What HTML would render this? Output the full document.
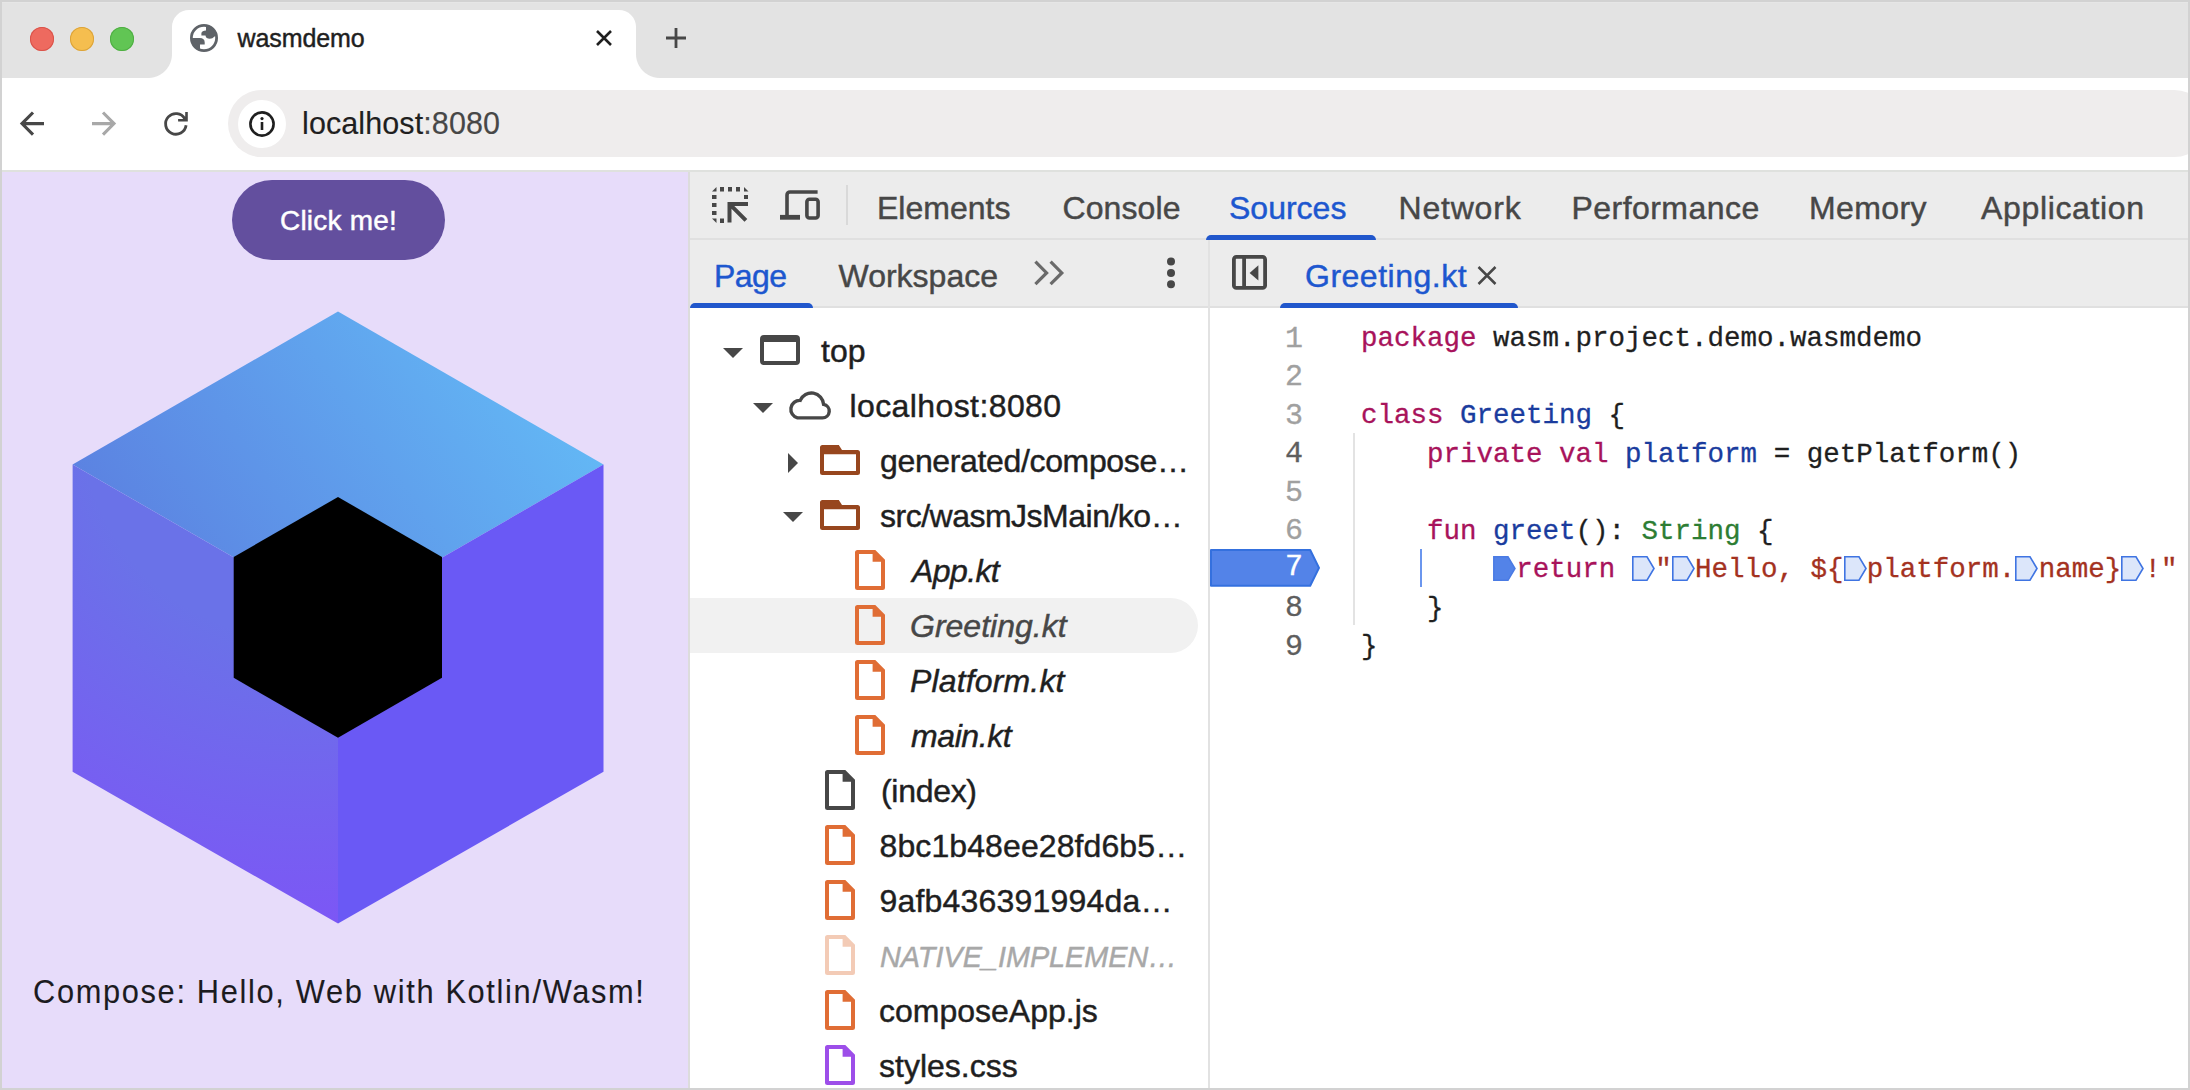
<!DOCTYPE html>
<html><head><meta charset="utf-8">
<style>
*{box-sizing:border-box;margin:0;padding:0}
html,body{width:2190px;height:1090px;overflow:hidden;background:#d2d2d2;font-family:"Liberation Sans",sans-serif}
.a{position:absolute}
.t{position:absolute;white-space:nowrap;line-height:1;-webkit-text-stroke:0.45px currentColor}
.mk{display:inline-block;width:23.3px;height:25px;vertical-align:-4px;position:relative}.mk svg{position:absolute;left:0;top:0}
#win{position:absolute;left:2px;top:2px;width:2186px;height:1086px;background:#fff;overflow:hidden}
</style></head><body>
<!-- tab strip -->
<div class="a" style="left:2px;top:2px;width:2186px;height:76px;background:#e3e3e3"></div>
<div class="a" style="left:2px;top:2px;width:2186px;height:1px;background:#e6e6e6"></div>
<!-- traffic lights -->
<div class="a" style="left:30px;top:27px;width:24px;height:24px;border-radius:50%;background:#ee6a5f;box-shadow:inset 0 0 0 1px #d9534a"></div>
<div class="a" style="left:70px;top:27px;width:24px;height:24px;border-radius:50%;background:#f5be4f;box-shadow:inset 0 0 0 1px #dba33a"></div>
<div class="a" style="left:110px;top:27px;width:24px;height:24px;border-radius:50%;background:#61c554;box-shadow:inset 0 0 0 1px #4fae43"></div>
<!-- active tab -->
<div class="a" style="left:172px;top:10px;width:464px;height:68px;background:#fff;border-radius:17px 17px 0 0"></div>
<div class="a" style="left:148px;top:54px;width:24px;height:24px;background:radial-gradient(circle at 0 0,#e3e3e3 23.5px,#fff 24.5px)"></div>
<div class="a" style="left:636px;top:54px;width:24px;height:24px;background:radial-gradient(circle at 100% 0,#e3e3e3 23.5px,#fff 24.5px)"></div>
<svg class="a" style="left:190px;top:24px" width="28" height="28" viewBox="0 0 28 28">
 <defs><clipPath id="gc"><circle cx="14" cy="14" r="12.5"/></clipPath></defs>
 <circle cx="14" cy="14" r="12.6" fill="none" stroke="#5f6368" stroke-width="2.8"/>
 <g clip-path="url(#gc)" fill="#5f6368">
  <path d="M16 0 V6.4 Q12 6.6 11.4 9 V11.4 H15.5 Q16 14.7 19.8 14.7 Q22.5 14.7 24.6 12.5 L30 8 V0 Z"/>
  <path d="M0 14 H9.7 Q14.7 14.2 14.7 18.5 V20.6 H10 V24.5 L12 30 H0 Z"/>
 </g>
</svg>
<div class="t" style="left:237.5px;top:25.5px;font-size:25px;color:#1f1f1f;letter-spacing:-0.1px">wasmdemo</div>
<svg class="a" style="left:593px;top:27px" width="22" height="22" viewBox="0 0 22 22"><path d="M4 4L18 18M18 4L4 18" stroke="#1f1f1f" stroke-width="2.6"/></svg>
<svg class="a" style="left:664px;top:26px" width="24" height="24" viewBox="0 0 24 24"><path d="M12 2V22M2 12H22" stroke="#474747" stroke-width="2.8"/></svg>

<!-- toolbar -->
<div class="a" style="left:2px;top:78px;width:2186px;height:92px;background:#fff"></div>
<div class="a" style="left:2px;top:170px;width:2186px;height:2px;background:#dfe1de"></div>
<svg class="a" style="left:16px;top:108px" width="32" height="32" viewBox="0 0 32 32"><path d="M28 15.6H6.5M17 4.5L6 15.6L17 26.7" fill="none" stroke="#474747" stroke-width="3.1"/></svg>
<svg class="a" style="left:88px;top:108px" width="32" height="32" viewBox="0 0 32 32"><path d="M4 15.6H25.5M15 4.5L26 15.6L15 26.7" fill="none" stroke="#a8a8a8" stroke-width="3.1"/></svg>
<svg class="a" style="left:160px;top:108px" width="32" height="32" viewBox="0 0 32 32"><path d="M24.82 10.75A10.3 10.3 0 1 0 26.1 17.3" fill="none" stroke="#474747" stroke-width="2.8"/><path d="M18.1 11.1H23.2L25.2 8.6V4.1H27.8V13.6H18.1Z" fill="#474747"/></svg>
<div class="a" style="left:228px;top:90px;width:1980px;height:67px;border-radius:34px;background:#efeded"></div>
<div class="a" style="left:238px;top:100px;width:48px;height:48px;border-radius:50%;background:#fff"></div>
<svg class="a" style="left:248px;top:110px" width="28" height="28" viewBox="0 0 28 28"><circle cx="14" cy="14" r="11.6" fill="none" stroke="#1f1f1f" stroke-width="2.6"/><rect x="12.7" y="12" width="2.6" height="8" fill="#1f1f1f"/><circle cx="14" cy="8.6" r="1.6" fill="#1f1f1f"/></svg>
<div class="t" style="left:302px;top:108px;font-size:30.5px;color:#1f1f1f;-webkit-text-stroke:0.15px currentColor;letter-spacing:0.1px">localhost<span style="color:#474747">:8080</span></div>

<!-- page -->
<div class="a" style="left:2px;top:172px;width:686px;height:916px;background:#e7dcfa"></div>
<div class="a" style="left:232px;top:180px;width:213px;height:80px;border-radius:40px;background:#634f9e"></div>
<div class="t" style="left:280px;top:207px;font-size:28px;color:#fff;letter-spacing:0.2px">Click me!</div>
<svg class="a" style="left:0;top:0" width="700" height="1090">
 <defs>
  <linearGradient id="gt" x1="130" y1="600" x2="520" y2="330" gradientUnits="userSpaceOnUse">
   <stop offset="0" stop-color="#5b7fe0"/><stop offset="1" stop-color="#63b8f5"/>
  </linearGradient>
  <radialGradient id="gl" cx="300" cy="420" r="520" gradientUnits="userSpaceOnUse">
   <stop offset="0.42" stop-color="#6a72e8"/><stop offset="1" stop-color="#7d55f6"/>
  </radialGradient>
 </defs>
 <path d="M338 311.5L603.5 464.5L338 617.5L72.6 464.5Z" fill="url(#gt)"/>
 <path d="M72.6 464.5L338 617.5V923.6L72.6 771.7Z" fill="url(#gl)"/>
 <path d="M603.5 464.5L338 617.5V923.6L603.5 771.7Z" fill="#6a59f5"/>
 <path d="M338 497L442 557V677.8L338 737.8L233.7 677.8V557Z" fill="#000"/>
</svg>
<div class="t" style="left:33px;top:974px;font-size:34px;color:#1c1b1f;-webkit-text-stroke:0.1px currentColor;letter-spacing:1.85px;transform:scaleX(0.905);transform-origin:0 0">Compose: Hello, Web with Kotlin/Wasm!</div>

<!-- devtools -->
<div class="a" style="left:688px;top:172px;width:2px;height:916px;background:#dcdcdc"></div>
<div class="a" style="left:690px;top:172px;width:1498px;height:136px;background:#ececec"></div>
<div class="a" style="left:690px;top:238px;width:1498px;height:2px;background:#e0e0e0"></div>
<div class="a" style="left:690px;top:306px;width:1498px;height:2px;background:#e0e0e0"></div>
<div class="a" style="left:690px;top:308px;width:1498px;height:780px;background:#fff"></div>
<div class="a" style="left:1208px;top:240px;width:2px;height:848px;background:#e2e2e2"></div>


<!-- devtools main toolbar -->
<svg class="a" style="left:712px;top:187px" width="37" height="36" viewBox="0 0 37 36" fill="#474747">
 <path d="M0 4.5L4.5 0V4.5Z"/>
 <rect x="8" y="0" width="4" height="4.5"/><rect x="16" y="0" width="4" height="4.5"/><rect x="24" y="0" width="4" height="4.5"/>
 <path d="M32 0L36.5 4.5H32Z"/>
 <rect x="0" y="8" width="4.5" height="4"/><rect x="0" y="16" width="4.5" height="4"/><rect x="0" y="24" width="4.5" height="4"/>
 <rect x="32" y="8" width="4" height="4"/>
 <path d="M0 31.5H4.5V36Z"/>
 <rect x="8" y="31.5" width="4" height="4.5"/>
 <path d="M15.5 15H36V19H22.3L35.3 32L32.5 34.8L19.5 21.8V35.5H15.5Z"/>
</svg>
<svg class="a" style="left:780px;top:190px" width="41" height="31" viewBox="0 0 41 31" fill="none" stroke="#474747">
 <path d="M37.6 2H10A3 3 0 0 0 7 5V27" stroke-width="3.6"/>
 <path d="M0 27.3H20" stroke-width="4.8"/>
 <rect x="26.9" y="9.3" width="11.2" height="18.7" rx="2.5" stroke-width="3.6"/>
</svg>
<div class="a" style="left:846px;top:185px;width:1.5px;height:40px;background:#d9d9d9"></div>
<div class="t" style="left:877px;top:192px;font-size:32px;color:#474747">Elements</div>
<div class="t" style="left:1062.5px;top:192px;font-size:32px;color:#474747;letter-spacing:0.1px">Console</div>
<div class="t" style="left:1229px;top:192px;font-size:32px;color:#1d57cf">Sources</div>
<div class="t" style="left:1398.5px;top:192px;font-size:32px;color:#474747;letter-spacing:0.8px">Network</div>
<div class="t" style="left:1571.5px;top:192px;font-size:32px;color:#474747;letter-spacing:0.45px">Performance</div>
<div class="t" style="left:1809px;top:192px;font-size:32px;color:#474747;letter-spacing:0.4px">Memory</div>
<div class="t" style="left:1981px;top:192px;font-size:32px;color:#474747;letter-spacing:0.65px">Application</div>
<div class="a" style="left:1205.5px;top:235px;width:170px;height:5px;background:#2157cc;border-radius:5px 5px 0 0"></div>

<!-- second toolbar: navigator -->
<div class="t" style="left:714px;top:259.5px;font-size:32px;color:#1d57cf;letter-spacing:-0.6px">Page</div>
<div class="a" style="left:690px;top:303px;width:123px;height:5px;background:#2157cc;border-radius:5px 5px 0 0"></div>
<div class="t" style="left:838.5px;top:259.5px;font-size:32px;color:#474747">Workspace</div>
<svg class="a" style="left:1033px;top:260px" width="34" height="26" viewBox="0 0 34 26" fill="none" stroke="#6a6a6a" stroke-width="3.2">
 <path d="M2.4 1.6L13.6 12.9L2.4 24.2M17.6 1.6L28.8 12.9L17.6 24.2"/>
</svg>
<svg class="a" style="left:1163px;top:255px" width="16" height="36" viewBox="0 0 16 36" fill="#474747">
 <circle cx="8" cy="6.6" r="4"/><circle cx="8" cy="17.9" r="4"/><circle cx="8" cy="29.2" r="4"/>
</svg>
<!-- editor tab -->
<svg class="a" style="left:1232px;top:255px" width="36" height="36" viewBox="0 0 36 36" fill="#474747">
 <rect x="1.9" y="1.9" width="31.2" height="31" rx="2.5" fill="none" stroke="#474747" stroke-width="3.8"/>
 <rect x="10.2" y="1" width="3.8" height="33"/>
 <path d="M17.6 17.9L26.4 10.2V25.6Z"/>
</svg>
<div class="t" style="left:1305px;top:259.5px;font-size:32px;color:#1d57cf;letter-spacing:0.5px">Greeting.kt</div>
<svg class="a" style="left:1476px;top:265px" width="22" height="21" viewBox="0 0 22 21" stroke="#474747" stroke-width="2.5"><path d="M2.5 2L19.5 19M19.5 2L2.5 19"/></svg>
<div class="a" style="left:1280px;top:303px;width:238px;height:5px;background:#2157cc;border-radius:5px 5px 0 0"></div>

<!-- navigator tree -->
<div class="a" style="left:690px;top:598px;width:508px;height:55px;background:#f1f1f1;border-radius:0 27.5px 27.5px 0"></div>
<svg class="a" style="left:723px;top:348px" width="20" height="10" viewBox="0 0 20 10"><path d="M0 0H20L10 10Z" fill="#474747"/></svg>
<svg class="a" style="left:760px;top:335px" width="40" height="30" viewBox="0 0 40 30"><path fill-rule="evenodd" fill="#474747" d="M4 0H36A4 4 0 0 1 40 4V26A4 4 0 0 1 36 30H4A4 4 0 0 1 0 26V4A4 4 0 0 1 4 0ZM4 7V26H36V7Z"/></svg>
<div class="t" style="left:821px;top:334.9px;font-size:32px;color:#1f1f1f;">top</div>
<svg class="a" style="left:753px;top:403px" width="20" height="10" viewBox="0 0 20 10"><path d="M0 0H20L10 10Z" fill="#474747"/></svg>
<svg class="a" style="left:787px;top:389px" width="46" height="31" viewBox="0 0 46 31"><path fill="none" stroke="#474747" stroke-width="3.4" d="M10.5 28.9H35.5A6.8 6.8 0 0 0 36.6 15.4A12.2 12.2 0 0 0 13.2 11.4A8.9 8.9 0 0 0 10.5 28.9Z"/></svg>
<div class="t" style="left:849.5px;top:389.9px;font-size:32px;color:#1f1f1f;letter-spacing:0.4px">localhost:8080</div>
<svg class="a" style="left:788px;top:453px" width="10" height="20" viewBox="0 0 10 20"><path d="M0 0V20L10 10Z" fill="#474747"/></svg>
<svg class="a" style="left:820px;top:445px" width="40" height="30" viewBox="0 0 40 30"><path fill-rule="evenodd" fill="#97461e" d="M2.5 0H18.8L22 5H37.5A2.5 2.5 0 0 1 40 7.5V27.5A2.5 2.5 0 0 1 37.5 30H2.5A2.5 2.5 0 0 1 0 27.5V2.5A2.5 2.5 0 0 1 2.5 0ZM4 9.2V26H36V9.2Z"/></svg>
<div class="t" style="left:880px;top:444.9px;font-size:32px;color:#1f1f1f;letter-spacing:-0.35px">generated/compose…</div>
<svg class="a" style="left:783px;top:512px" width="20" height="10" viewBox="0 0 20 10"><path d="M0 0H20L10 10Z" fill="#474747"/></svg>
<svg class="a" style="left:820px;top:500px" width="40" height="30" viewBox="0 0 40 30"><path fill-rule="evenodd" fill="#97461e" d="M2.5 0H18.8L22 5H37.5A2.5 2.5 0 0 1 40 7.5V27.5A2.5 2.5 0 0 1 37.5 30H2.5A2.5 2.5 0 0 1 0 27.5V2.5A2.5 2.5 0 0 1 2.5 0ZM4 9.2V26H36V9.2Z"/></svg>
<div class="t" style="left:880px;top:499.9px;font-size:32px;color:#1f1f1f;letter-spacing:-0.5px">src/wasmJsMain/ko…</div>
<svg class="a" style="left:855px;top:550px" width="30" height="40" viewBox="0 0 30 40"><path fill-rule="evenodd" fill="#e06d35" d="M2.5 0H20.3L30 9.7V37.5A2.5 2.5 0 0 1 27.5 40H2.5A2.5 2.5 0 0 1 0 37.5V2.5A2.5 2.5 0 0 1 2.5 0ZM4 4V36H26V11.8H17.6V4Z"/></svg>
<div class="t" style="left:912px;top:554.9px;font-size:32px;color:#1f1f1f;font-style:italic;letter-spacing:-0.6px">App.kt</div>
<svg class="a" style="left:855px;top:605px" width="30" height="40" viewBox="0 0 30 40"><path fill-rule="evenodd" fill="#e06d35" d="M2.5 0H20.3L30 9.7V37.5A2.5 2.5 0 0 1 27.5 40H2.5A2.5 2.5 0 0 1 0 37.5V2.5A2.5 2.5 0 0 1 2.5 0ZM4 4V36H26V11.8H17.6V4Z"/></svg>
<div class="t" style="left:910px;top:609.9px;font-size:32px;color:#474747;font-style:italic;">Greeting.kt</div>
<svg class="a" style="left:855px;top:660px" width="30" height="40" viewBox="0 0 30 40"><path fill-rule="evenodd" fill="#e06d35" d="M2.5 0H20.3L30 9.7V37.5A2.5 2.5 0 0 1 27.5 40H2.5A2.5 2.5 0 0 1 0 37.5V2.5A2.5 2.5 0 0 1 2.5 0ZM4 4V36H26V11.8H17.6V4Z"/></svg>
<div class="t" style="left:910px;top:664.9px;font-size:32px;color:#1f1f1f;font-style:italic;letter-spacing:0.15px">Platform.kt</div>
<svg class="a" style="left:855px;top:715px" width="30" height="40" viewBox="0 0 30 40"><path fill-rule="evenodd" fill="#e06d35" d="M2.5 0H20.3L30 9.7V37.5A2.5 2.5 0 0 1 27.5 40H2.5A2.5 2.5 0 0 1 0 37.5V2.5A2.5 2.5 0 0 1 2.5 0ZM4 4V36H26V11.8H17.6V4Z"/></svg>
<div class="t" style="left:911px;top:719.9px;font-size:32px;color:#1f1f1f;font-style:italic;letter-spacing:-0.4px">main.kt</div>
<svg class="a" style="left:825px;top:770px" width="30" height="40" viewBox="0 0 30 40"><path fill-rule="evenodd" fill="#474747" d="M2.5 0H20.3L30 9.7V37.5A2.5 2.5 0 0 1 27.5 40H2.5A2.5 2.5 0 0 1 0 37.5V2.5A2.5 2.5 0 0 1 2.5 0ZM4 4V36H26V11.8H17.6V4Z"/></svg>
<div class="t" style="left:881px;top:774.9px;font-size:32px;color:#1f1f1f;letter-spacing:-0.3px">(index)</div>
<svg class="a" style="left:825px;top:825px" width="30" height="40" viewBox="0 0 30 40"><path fill-rule="evenodd" fill="#e06d35" d="M2.5 0H20.3L30 9.7V37.5A2.5 2.5 0 0 1 27.5 40H2.5A2.5 2.5 0 0 1 0 37.5V2.5A2.5 2.5 0 0 1 2.5 0ZM4 4V36H26V11.8H17.6V4Z"/></svg>
<div class="t" style="left:879.5px;top:829.9px;font-size:32px;color:#1f1f1f;letter-spacing:0.1px">8bc1b48ee28fd6b5…</div>
<svg class="a" style="left:825px;top:880px" width="30" height="40" viewBox="0 0 30 40"><path fill-rule="evenodd" fill="#e06d35" d="M2.5 0H20.3L30 9.7V37.5A2.5 2.5 0 0 1 27.5 40H2.5A2.5 2.5 0 0 1 0 37.5V2.5A2.5 2.5 0 0 1 2.5 0ZM4 4V36H26V11.8H17.6V4Z"/></svg>
<div class="t" style="left:879.5px;top:884.9px;font-size:32px;color:#1f1f1f;letter-spacing:0.2px">9afb436391994da…</div>
<svg class="a" style="left:825px;top:935px" width="30" height="40" viewBox="0 0 30 40"><path fill-rule="evenodd" fill="#f3cbb6" d="M2.5 0H20.3L30 9.7V37.5A2.5 2.5 0 0 1 27.5 40H2.5A2.5 2.5 0 0 1 0 37.5V2.5A2.5 2.5 0 0 1 2.5 0ZM4 4V36H26V11.8H17.6V4Z"/></svg>
<div class="t" style="left:880px;top:939.9px;font-size:32px;color:#a8a8a8;font-style:italic;font-size:28.8px;top:942.6px">NATIVE_IMPLEMEN…</div>
<svg class="a" style="left:825px;top:990px" width="30" height="40" viewBox="0 0 30 40"><path fill-rule="evenodd" fill="#e06d35" d="M2.5 0H20.3L30 9.7V37.5A2.5 2.5 0 0 1 27.5 40H2.5A2.5 2.5 0 0 1 0 37.5V2.5A2.5 2.5 0 0 1 2.5 0ZM4 4V36H26V11.8H17.6V4Z"/></svg>
<div class="t" style="left:879px;top:994.9px;font-size:32px;color:#1f1f1f;">composeApp.js</div>
<svg class="a" style="left:825px;top:1045px" width="30" height="40" viewBox="0 0 30 40"><path fill-rule="evenodd" fill="#9d4ee9" d="M2.5 0H20.3L30 9.7V37.5A2.5 2.5 0 0 1 27.5 40H2.5A2.5 2.5 0 0 1 0 37.5V2.5A2.5 2.5 0 0 1 2.5 0ZM4 4V36H26V11.8H17.6V4Z"/></svg>
<div class="t" style="left:879px;top:1049.9px;font-size:32px;color:#1f1f1f;">styles.css</div>
<!-- editor -->
<div class="a" style="left:1353px;top:433px;width:2px;height:192px;background:#e3e3e3"></div>
<div class="a" style="left:1420px;top:549px;width:2px;height:38px;background:#6b96ee"></div>
<svg class="a" style="left:1210px;top:548px" width="112" height="40" viewBox="0 0 112 40"><path d="M1 2H100.2L109 19.9L100.2 37.8H1Z" fill="#5383e8" stroke="#3470de" stroke-width="2" stroke-linejoin="round"/></svg>
<div class="t" style="left:1200px;width:103px;text-align:right;top:323.5px;font-family:'Liberation Mono',monospace;font-size:30px;-webkit-text-stroke:0.3px currentColor;color:#a0a0a0">1</div>
<div class="t" style="left:1361px;top:325.4px;font-family:'Liberation Mono',monospace;font-size:27.5px;-webkit-text-stroke:0.3px currentColor;color:#1f1f1f;white-space:pre"><span style="color:#a8135b">package</span> wasm.project.demo.wasmdemo</div>
<div class="t" style="left:1200px;width:103px;text-align:right;top:362.0px;font-family:'Liberation Mono',monospace;font-size:30px;-webkit-text-stroke:0.3px currentColor;color:#a0a0a0">2</div>
<div class="t" style="left:1200px;width:103px;text-align:right;top:400.5px;font-family:'Liberation Mono',monospace;font-size:30px;-webkit-text-stroke:0.3px currentColor;color:#a0a0a0">3</div>
<div class="t" style="left:1361px;top:402.4px;font-family:'Liberation Mono',monospace;font-size:27.5px;-webkit-text-stroke:0.3px currentColor;color:#1f1f1f;white-space:pre"><span style="color:#a8135b">class</span> <span style="color:#1a3c9e">Greeting</span> {</div>
<div class="t" style="left:1200px;width:103px;text-align:right;top:439.0px;font-family:'Liberation Mono',monospace;font-size:30px;-webkit-text-stroke:0.3px currentColor;color:#5e5e5e">4</div>
<div class="t" style="left:1361px;top:440.9px;font-family:'Liberation Mono',monospace;font-size:27.5px;-webkit-text-stroke:0.3px currentColor;color:#1f1f1f;white-space:pre">    <span style="color:#a8135b">private</span> <span style="color:#a8135b">val</span> <span style="color:#1a3c9e">platform</span> = getPlatform()</div>
<div class="t" style="left:1200px;width:103px;text-align:right;top:477.5px;font-family:'Liberation Mono',monospace;font-size:30px;-webkit-text-stroke:0.3px currentColor;color:#a0a0a0">5</div>
<div class="t" style="left:1200px;width:103px;text-align:right;top:516.0px;font-family:'Liberation Mono',monospace;font-size:30px;-webkit-text-stroke:0.3px currentColor;color:#a0a0a0">6</div>
<div class="t" style="left:1361px;top:517.9px;font-family:'Liberation Mono',monospace;font-size:27.5px;-webkit-text-stroke:0.3px currentColor;color:#1f1f1f;white-space:pre">    <span style="color:#a8135b">fun</span> <span style="color:#1a3c9e">greet</span>(): <span style="color:#2d7d33">String</span> {</div>
<div class="t" style="left:1200px;width:103px;text-align:right;top:552.0px;font-family:'Liberation Mono',monospace;font-size:30px;-webkit-text-stroke:0.3px currentColor;color:#ffffff">7</div>
<div class="t" style="left:1200px;width:103px;text-align:right;top:593.0px;font-family:'Liberation Mono',monospace;font-size:30px;-webkit-text-stroke:0.3px currentColor;color:#5e5e5e">8</div>
<div class="t" style="left:1361px;top:594.9px;font-family:'Liberation Mono',monospace;font-size:27.5px;-webkit-text-stroke:0.3px currentColor;color:#1f1f1f;white-space:pre">    }</div>
<div class="t" style="left:1200px;width:103px;text-align:right;top:631.5px;font-family:'Liberation Mono',monospace;font-size:30px;-webkit-text-stroke:0.3px currentColor;color:#5e5e5e">9</div>
<div class="t" style="left:1361px;top:633.4px;font-family:'Liberation Mono',monospace;font-size:27.5px;-webkit-text-stroke:0.3px currentColor;color:#1f1f1f;white-space:pre">}</div>
<div class="t" style="left:1361px;top:556.4px;font-family:'Liberation Mono',monospace;font-size:27.5px;-webkit-text-stroke:0.3px currentColor;color:#1f1f1f;white-space:pre">        <span class="mk"><svg width="23" height="25" viewBox="0 0 23 25"><path d="M0.8 0.8H15L22 12.5L15 24.2H0.8Z" fill="#5383e8" stroke="#4a7be4" stroke-width="1.5"/></svg></span><span style="color:#a8135b">return</span> <span class="mk"><svg width="23" height="25" viewBox="0 0 23 25"><path d="M0.8 0.8H15L22 12.5L15 24.2H0.8Z" fill="#dce6fa" stroke="#3f74e2" stroke-width="1.6"/></svg></span><span style="color:#a4321f">"</span><span class="mk"><svg width="23" height="25" viewBox="0 0 23 25"><path d="M0.8 0.8H15L22 12.5L15 24.2H0.8Z" fill="#dce6fa" stroke="#3f74e2" stroke-width="1.6"/></svg></span><span style="color:#a4321f">Hello, ${</span><span class="mk"><svg width="23" height="25" viewBox="0 0 23 25"><path d="M0.8 0.8H15L22 12.5L15 24.2H0.8Z" fill="#dce6fa" stroke="#3f74e2" stroke-width="1.6"/></svg></span><span style="color:#a4321f">platform.</span><span class="mk"><svg width="23" height="25" viewBox="0 0 23 25"><path d="M0.8 0.8H15L22 12.5L15 24.2H0.8Z" fill="#dce6fa" stroke="#3f74e2" stroke-width="1.6"/></svg></span><span style="color:#a4321f">name}</span><span class="mk"><svg width="23" height="25" viewBox="0 0 23 25"><path d="M0.8 0.8H15L22 12.5L15 24.2H0.8Z" fill="#dce6fa" stroke="#3f74e2" stroke-width="1.6"/></svg></span><span style="color:#a4321f">!"</span></div>
<!-- window border -->
<div class="a" style="left:0;top:0;width:2190px;height:2px;background:#d2d2d2"></div>
<div class="a" style="left:0;top:0;width:2px;height:1090px;background:#d2d2d2"></div>
<div class="a" style="left:2188px;top:0;width:2px;height:1090px;background:#d2d2d2"></div>
<div class="a" style="left:0;top:1088px;width:2190px;height:2px;background:#d2d2d2"></div>
</body></html>
